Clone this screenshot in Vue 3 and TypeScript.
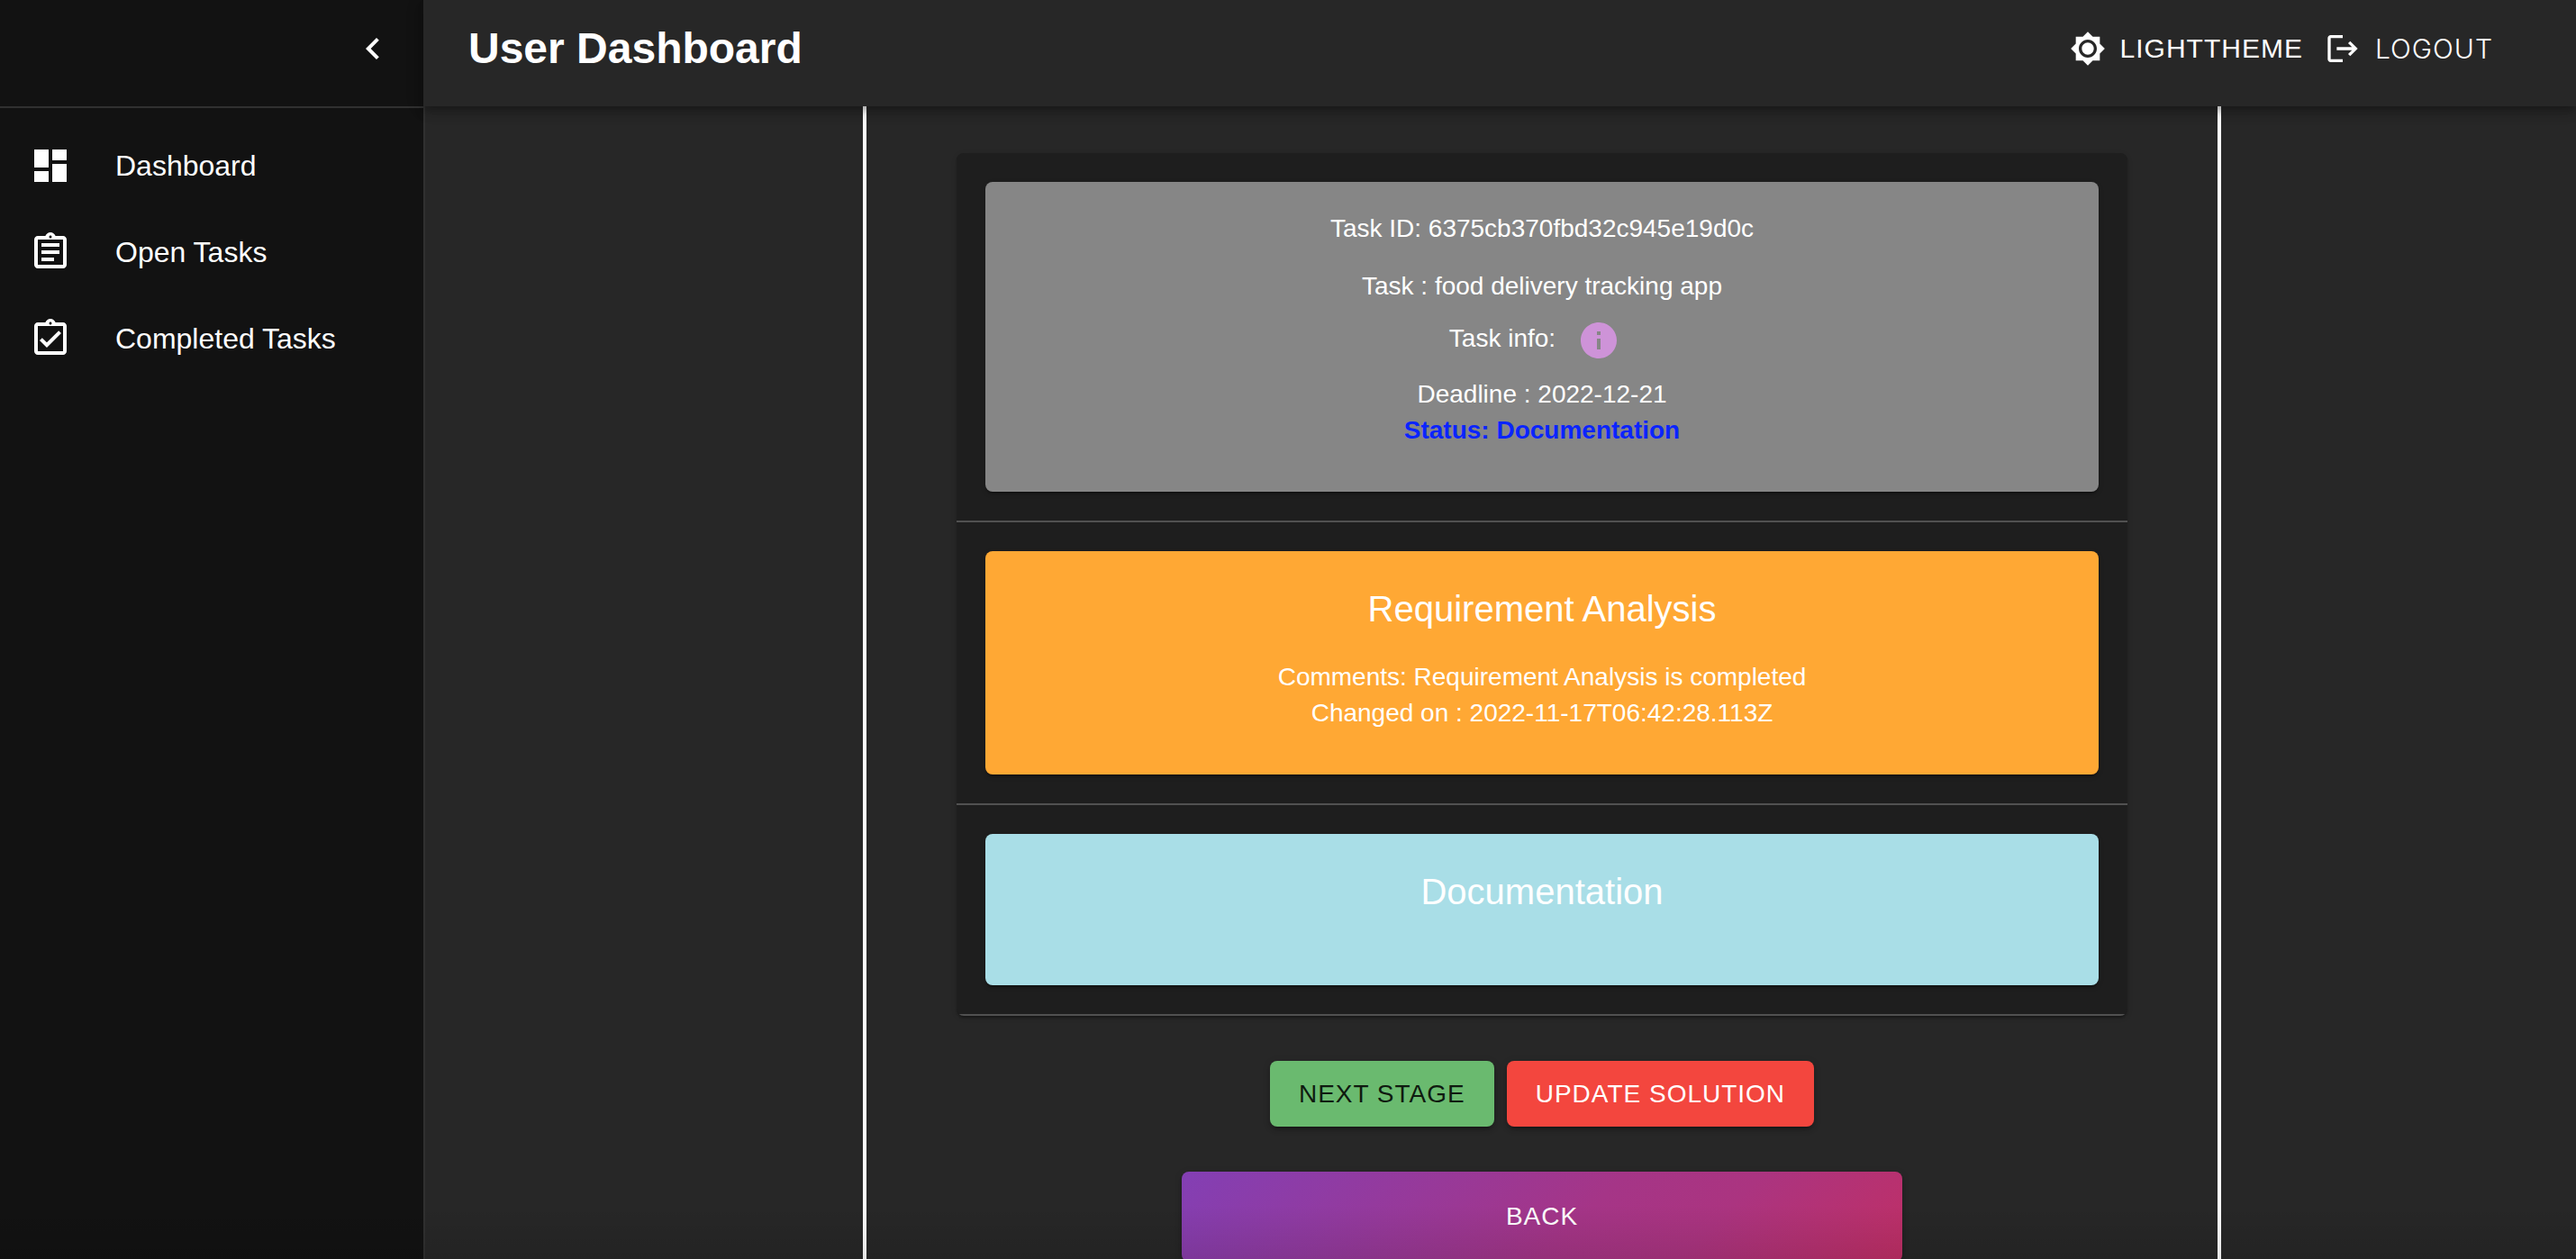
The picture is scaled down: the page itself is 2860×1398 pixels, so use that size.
<script setup lang="ts">
import { ref } from 'vue'

interface NavItem {
  label: string
  href: string
  icon: string
}

interface Stage {
  title: string
  tone: string
  lines: string[]
}

const clip =
  'M19 3h-4.18C14.4 1.84 13.3 1 12 1c-1.3 0-2.4.84-2.82 2H5c-1.1 0-2 .9-2 2v14c0 1.1.9 2 2 2h14c1.1 0 2-.9 2-2V5c0-1.1-.9-2-2-2zm-7-.25c.41 0 .75.34.75.75s-.34.75-.75.75-.75-.34-.75-.75.34-.75.75-.75zM19 19H5V5h14v14z'

const navItems: NavItem[] = [
  { label: 'Dashboard', href: '#dashboard', icon: 'M3 13h8V3H3v10zm0 8h8v-6H3v6zm10 0h8V11h-8v10zm0-18v6h8V3h-8z' },
  { label: 'Open Tasks', href: '#open', icon: 'M7 15h7v2H7zm0-4h10v2H7zm0-4h10v2H7z' + clip },
  { label: 'Completed Tasks', href: '#completed', icon: 'M17.99 9l-1.41-1.42-6.59 6.59-2.58-2.57-1.42 1.41 4 3.99z' + clip },
]

const stages: Stage[] = [
  {
    title: 'Requirement Analysis',
    tone: 'orange',
    lines: ['Comments: Requirement Analysis is completed', 'Changed on : 2022-11-17T06:42:28.113Z'],
  },
  { title: 'Documentation', tone: 'blue', lines: [] },
]

const status = ref('Documentation')
</script>

<template>
  <div class="app">
    <aside class="sidebar">
      <div class="sidebar-top">
        <button class="plain" type="button" aria-label="Collapse menu">
          <svg class="icon" viewBox="0 0 24 24"><path d="M15.41 7.41 14 6l-6 6 6 6 1.41-1.41L10.83 12z" /></svg>
        </button>
      </div>
      <nav class="nav">
        <a v-for="item in navItems" :key="item.label" class="nav-item" :href="item.href">
          <svg class="icon" viewBox="0 0 24 24"><path :d="item.icon" /></svg>
          <span>{{ item.label }}</span>
        </a>
      </nav>
    </aside>

    <div class="page">
      <header class="topbar">
        <h1>User Dashboard</h1>
        <div class="actions">
          <button class="plain action" type="button">
            <svg viewBox="0 0 24 24">
              <path
                d="M20 8.69V4h-4.69L12 .69 8.69 4H4v4.69L.69 12 4 15.31V20h4.69L12 23.31 15.31 20H20v-4.69L23.31 12 20 8.69zM12 18c-3.31 0-6-2.69-6-6s2.69-6 6-6 6 2.69 6 6-2.69 6-6 6zm0-10c-2.21 0-4 1.79-4 4s1.79 4 4 4 4-1.79 4-4-1.79-4-4-4z"
              />
            </svg>
            LIGHTTHEME
          </button>
          <button class="plain action light" type="button">
            <svg viewBox="0 0 24 24">
              <path
                d="m17 7-1.41 1.41L18.17 11H8v2h10.17l-2.58 2.58L17 17l5-5zM4 5h8V3H4c-1.1 0-2 .9-2 2v14c0 1.1.9 2 2 2h8v-2H4V5z"
              />
            </svg>
            LOGOUT
          </button>
        </div>
      </header>

      <main class="content">
        <div class="column">
          <div class="panel">
            <section class="row">
              <article class="card gray">
                <p class="spaced">Task ID: 6375cb370fbd32c945e19d0c</p>
                <p>Task : food delivery tracking app</p>
                <div class="info">
                  <span>Task info:</span>
                  <button class="plain info-button" type="button" aria-label="Show task info">
                    <svg class="icon" viewBox="0 0 24 24">
                      <path d="M12 2C6.48 2 2 6.48 2 12s4.48 10 10 10 10-4.48 10-10S17.52 2 12 2zm1 15h-2v-6h2v6zm0-8h-2V7h2v2z" />
                    </svg>
                  </button>
                </div>
                <p>Deadline : 2022-12-21</p>
                <p class="status">Status: {{ status }}</p>
              </article>
            </section>
            <section v-for="stage in stages" :key="stage.title" class="row">
              <article class="card" :class="stage.tone">
                <h2>{{ stage.title }}</h2>
                <p v-for="line in stage.lines" :key="line">{{ line }}</p>
              </article>
            </section>
          </div>
          <div class="buttons">
            <button class="solid next" type="button">NEXT STAGE</button>
            <button class="solid update" type="button">UPDATE SOLUTION</button>
          </div>
          <button class="solid back" type="button">BACK</button>
        </div>
      </main>
    </div>
  </div>
</template>

<style>
body {
  margin: 0;
  background: #272727;
  overflow: hidden;
}
</style>

<style scoped>
.app {
  position: relative;
  display: flex;
  height: 100vh;
  overflow: hidden;
  color: #fff;
  font-family: 'Liberation Sans', Arial, sans-serif;
  font-size: 28px;
  line-height: 40px;
}

/* soft shade along the bottom edge of the window */
.app::after {
  content: '';
  position: absolute;
  right: 0;
  bottom: 0;
  left: 0;
  height: 60px;
  background: linear-gradient(rgba(0, 0, 0, 0), rgba(0, 0, 0, 0.1));
  pointer-events: none;
}

svg {
  display: block;
  width: 40px;
  height: 40px;
  flex: none;
  fill: currentColor;
}

svg.icon {
  width: 48px;
  height: 48px;
}

h1,
h2,
p {
  margin: 0;
}

button {
  margin: 0;
  border: 0;
  font: inherit;
  color: inherit;
  cursor: pointer;
}

.plain {
  padding: 0;
  background: none;
}

.sidebar {
  flex: none;
  width: 470px;
  background: #121212;
  border-right: 2px solid #303030;
}

.sidebar-top {
  display: flex;
  align-items: flex-start;
  justify-content: flex-end;
  box-sizing: border-box;
  height: 120px;
  padding: 30px 32px;
  border-bottom: 2px solid #303030;
}

.nav {
  padding: 16px 0;
}

.nav-item {
  display: flex;
  align-items: center;
  gap: 48px;
  height: 96px;
  padding: 0 32px;
  color: inherit;
  font-size: 32px;
  line-height: 48px;
  text-decoration: none;
}

.page {
  flex: 1;
  min-width: 0;
  display: flex;
  flex-direction: column;
}

.topbar {
  position: relative;
  z-index: 1;
  flex: none;
  display: flex;
  align-items: center;
  justify-content: space-between;
  box-sizing: border-box;
  height: 118px;
  margin-left: -2px;
  padding: 0 92px 10px 50px;
  background: #272727;
  box-shadow:
    0 4px 8px -2px rgba(0, 0, 0, 0.2),
    0 8px 10px 0 rgba(0, 0, 0, 0.14),
    0 2px 20px 0 rgba(0, 0, 0, 0.12);
}

h1 {
  font-size: 48px;
  line-height: 64px;
  font-weight: 700;
}

.actions {
  display: flex;
  gap: 24px;
}

.action {
  display: flex;
  align-items: center;
  gap: 16px;
  font-size: 30px;
  letter-spacing: 1px;
}

.light {
  font-family: Inter, 'Liberation Sans', sans-serif;
  font-weight: 300;
}

.content {
  flex: 1;
  min-height: 0;
  padding-left: 92px;
}

.column {
  display: flex;
  flex-direction: column;
  align-items: center;
  gap: 50px;
  box-sizing: border-box;
  max-width: 1508px;
  min-height: 100%;
  margin: 0 auto;
  padding: 52px 100px 0;
  border: solid #fff;
  border-width: 0 4px;
}

.panel {
  align-self: stretch;
  overflow: hidden;
  background: #1e1e1e;
  border-radius: 8px;
  box-shadow:
    0 4px 2px -2px rgba(0, 0, 0, 0.2),
    0 2px 2px 0 rgba(0, 0, 0, 0.14),
    0 2px 6px 0 rgba(0, 0, 0, 0.12);
}

.row {
  padding: 32px;
  border-bottom: 2px solid #515151;
}

.card {
  padding: 32px 32px 48px;
  border-radius: 8px;
  text-align: center;
  box-shadow:
    0 4px 2px -2px rgba(0, 0, 0, 0.2),
    0 2px 2px 0 rgba(0, 0, 0, 0.14),
    0 2px 6px 0 rgba(0, 0, 0, 0.12);
}

.gray {
  background: #868686;
}

.orange {
  background: #ffa834;
}

.blue {
  background: #a9dee7;
}

h2 {
  margin-bottom: 24px;
  font-size: 40px;
  line-height: 64px;
  font-weight: 400;
}

.spaced {
  margin-bottom: 24px;
}

.info {
  display: flex;
  justify-content: center;
  gap: 8px;
}

.info span {
  padding-top: 18px;
}

.info-button {
  padding: 16px;
  color: #ce93d8;
}

.status {
  color: #0a24ff;
  font-weight: 700;
}

.buttons {
  display: flex;
  gap: 14px;
}

.solid {
  padding: 12px 32px;
  border-radius: 8px;
  line-height: 49px;
  letter-spacing: 1px;
  box-shadow:
    0 6px 2px -4px rgba(0, 0, 0, 0.2),
    0 4px 4px 0 rgba(0, 0, 0, 0.14),
    0 2px 10px 0 rgba(0, 0, 0, 0.12);
}

.next {
  background: #6aba6f;
  color: #0f1a10;
}

.update {
  background: #f3463e;
}

.back {
  width: 800px;
  max-width: 100%;
  padding: 24px 32px;
  line-height: 52px;
  background: linear-gradient(135deg, #833fb4, #a53587 55%, #ab3480 72%, #c02f65);
}
</style>
